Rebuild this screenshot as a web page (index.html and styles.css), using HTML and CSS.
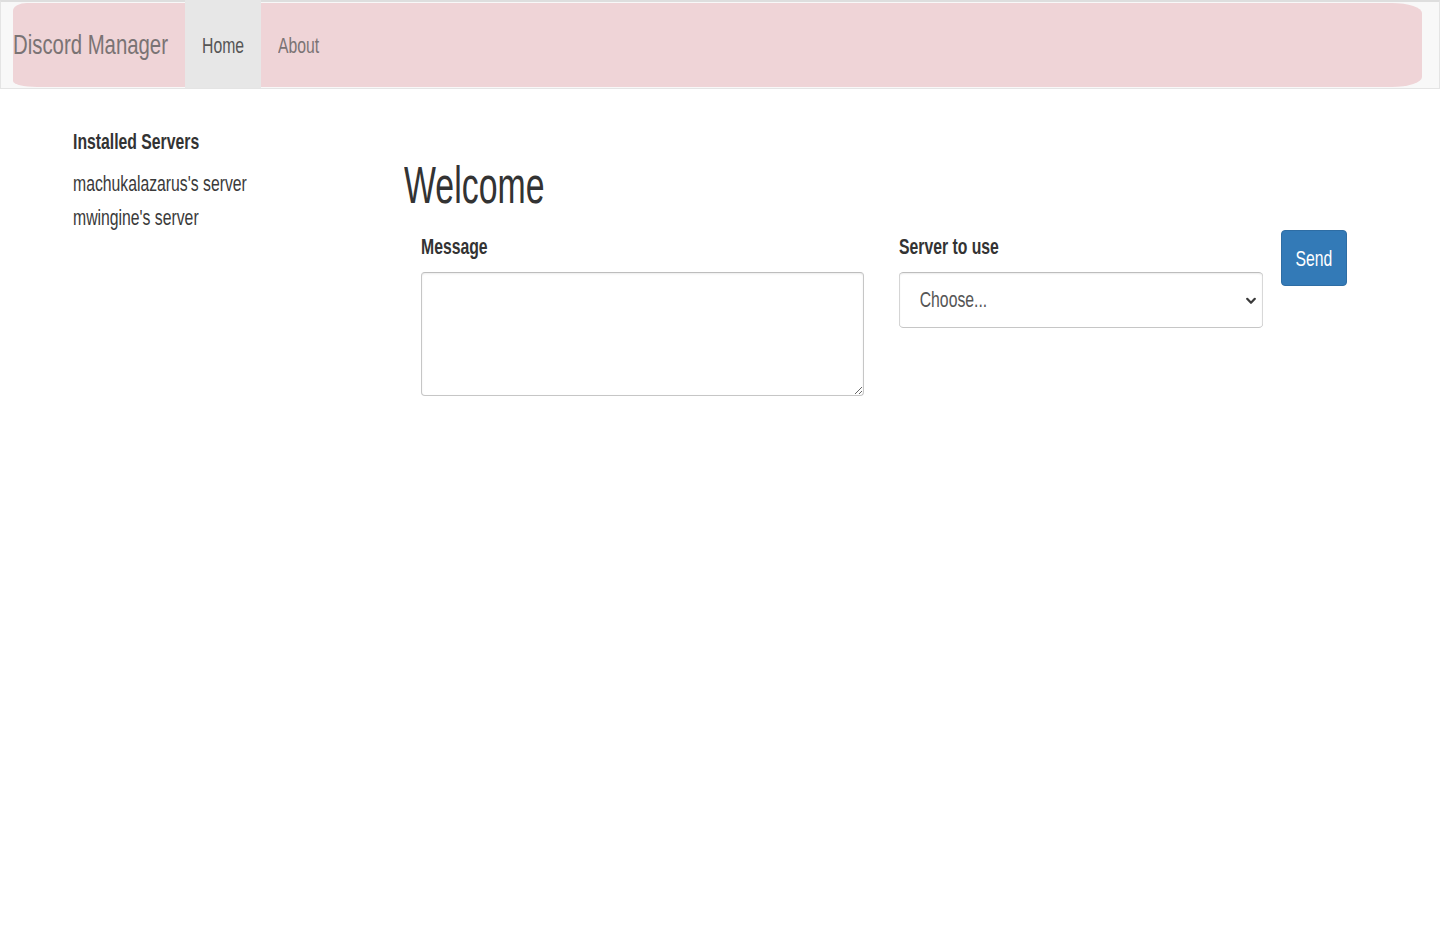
FILE: index.html
```html
<!DOCTYPE html>
<html lang="en">
<head>
<meta charset="utf-8">
<title>Discord Manager</title>
<link rel="stylesheet" href="styles.css">
</head>
<body>
<header class="navbar">
  <nav class="navbar-inner">
    <a class="brand" href="#"><span class="sq">Discord Manager</span></a>
    <a class="nav-link active" href="#"><span class="sq">Home</span></a>
    <a class="nav-link" href="#"><span class="sq">About</span></a>
  </nav>
</header>
<main class="layout">
  <aside class="sidebar">
    <h5 class="side-title"><span class="sq">Installed Servers</span></h5>
    <ul class="server-list">
      <li><span class="sq">machukalazarus's server</span></li>
      <li><span class="sq">mwingine's server</span></li>
    </ul>
  </aside>
  <section class="content">
    <h2 class="title"><span class="sq sq-title">Welcome</span></h2>
    <form class="send-form" onsubmit="return false">
      <div class="field field-message">
        <label class="label" for="msg"><span class="sq">Message</span></label>
        <textarea id="msg" class="textarea"></textarea>
      </div>
      <div class="field field-server">
        <label class="label" for="srv"><span class="sq">Server to use</span></label>
        <div class="select-wrap">
          <select id="srv" class="select">
            <option>Choose...</option>
            <option>machukalazarus's server</option>
            <option>mwingine's server</option>
          </select>
          <svg class="chev" width="10" height="8" viewBox="0 0 10 8" aria-hidden="true"><path d="M1.2 1.8 L5 5.8 L8.8 1.8" fill="none" stroke="#3a3a3a" stroke-width="2.2" stroke-linecap="round" stroke-linejoin="round"/></svg>
        </div>
      </div>
      <button class="btn" type="submit"><span class="sq sq-center">Send</span></button>
    </form>
  </section>
</main>
</body>
</html>
```
FILE: styles.css
```css
html, body {
  margin: 0;
  padding: 0;
  background: #fff;
}
body {
  font-family: "Liberation Sans", Arial, Helvetica, sans-serif;
  font-size: 21.3px;
  color: #333;
}
.sq {
  display: inline-block;
  white-space: nowrap;
  transform: scaleX(0.74);
  transform-origin: 0 50%;
}
.sq-title {
  transform: scaleX(0.645);
}
.sq-center {
  transform-origin: 50% 50%;
}

/* navbar */
.navbar {
  box-sizing: border-box;
  height: 89px;
  background: #f8f8f8;
  border: 1px solid #e4e4e4;
  border-top: 2px solid #dedede;
}
.navbar-inner {
  display: flex;
  align-items: stretch;
  height: 84px;
  margin: 1px 17px 0 12px;
  background: #efd4d7;
  border-radius: 14px 30px 30px 24px / 8px 10px 10px 6px;
}
.brand {
  display: flex;
  align-items: center;
  width: 172px;
  font-size: 27.5px;
  line-height: 1;
  color: #7a7374;
  text-decoration: none;
}
.nav-link {
  display: flex;
  align-items: center;
  box-sizing: border-box;
  padding: 3px 17px 0;
  font-size: 21.3px;
  line-height: 1;
  color: #7a7374;
  text-decoration: none;
}
.nav-link.active {
  width: 76px;
  margin: -3px 0 -1px;
  padding-top: 6px;
  background: #e7e7e7;
  color: #555;
}

/* layout */
.layout {
  display: flex;
  align-items: flex-start;
}
.sidebar {
  box-sizing: border-box;
  flex: 0 0 404px;
  padding-left: 73px;
}
.side-title {
  margin: 40px 0 12px;
  font-size: 21.3px;
  line-height: 26px;
  font-weight: 700;
  color: #333;
}
.server-list {
  list-style: none;
  margin: 0;
  padding: 0;
}
.server-list li {
  line-height: 34px;
  color: #3a3a3a;
}

.content {
  flex: 1;
}
.title {
  margin: 67px 0 0;
  font-size: 52.5px;
  line-height: 58px;
  font-weight: 400;
  color: #333;
}

.send-form {
  display: flex;
  align-items: flex-start;
  margin-top: 16px;
  padding-left: 17px;
}
.label {
  display: block;
  margin: 4px 0 12px;
  line-height: 26px;
  font-weight: 700;
  color: #333;
}
.field-message {
  width: 443px;
}
.textarea {
  display: block;
  box-sizing: border-box;
  width: 443px;
  height: 124px;
  margin: 0;
  border: 1px solid #c6c6c6;
  border-top-color: #bdbdbd;
  border-radius: 4px;
  box-shadow: inset 0 1px 2px rgba(0, 0, 0, 0.08);
  resize: vertical;
  font: inherit;
}
.field-server {
  width: 364px;
  margin-left: 35px;
}
.select-wrap {
  position: relative;
  width: 364px;
  height: 56px;
}
.select {
  box-sizing: border-box;
  width: 492px;
  height: 56px;
  margin: 0;
  padding: 0 40px 0 27px;
  -webkit-appearance: none;
  appearance: none;
  background: #fff;
  border: 1px solid #c6c6c6;
  border-top-color: #bdbdbd;
  border-left-width: 1.35px;
  border-right-width: 1.35px;
  border-radius: 6px / 4px;
  box-shadow: inset 0 1px 2px rgba(0, 0, 0, 0.08);
  font: inherit;
  color: #555;
  transform: scaleX(0.74);
  transform-origin: 0 50%;
}
.chev {
  position: absolute;
  right: 7px;
  top: 25px;
  pointer-events: none;
}
.btn {
  display: flex;
  align-items: center;
  justify-content: center;
  box-sizing: border-box;
  width: 66px;
  height: 56px;
  margin-left: 18px;
  padding: 3px 0 0;
  background: #337ab7;
  border: 1px solid #2e6da4;
  border-radius: 4px;
  color: #fff;
  font: inherit;
  line-height: 1;
  cursor: pointer;
}
```
